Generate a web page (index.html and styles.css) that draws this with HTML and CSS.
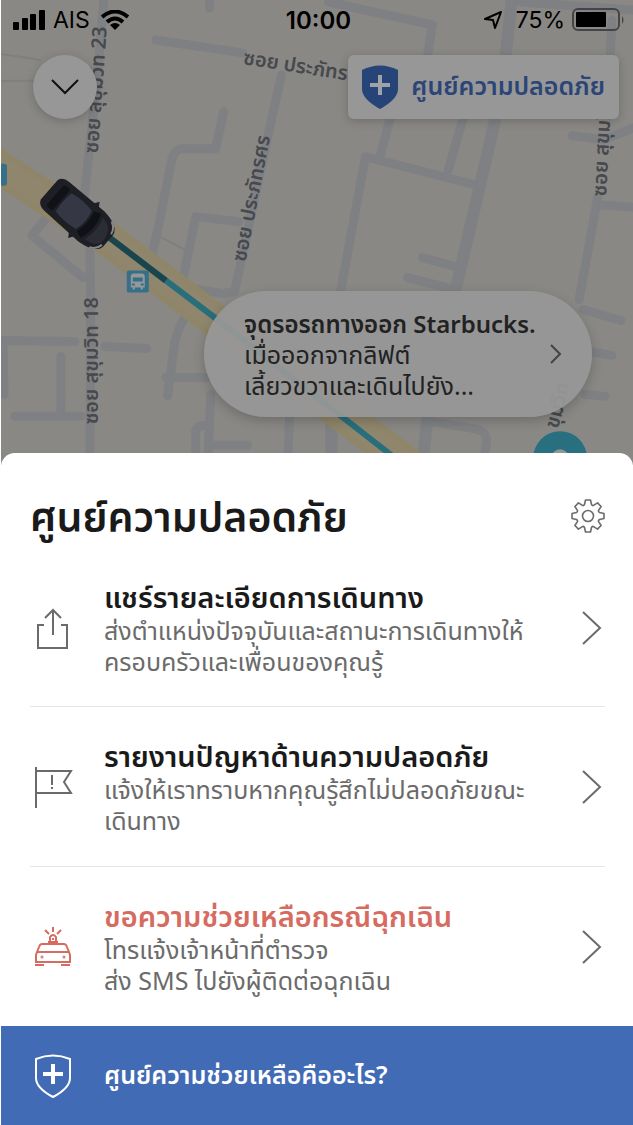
FILE: index.html
```
<!DOCTYPE html>
<html lang="th">

<head>
  <meta charset="UTF-8">
  <meta name="viewport" content="width=device-width, initial-scale=1.0">
  <title>ศูนย์ความปลอดภัย</title>
  <link rel="stylesheet" href="styles.css">
</head>

<body>
  <section class="trip">
    <svg class="map" viewBox="0 0 633 466" preserveAspectRatio="xMidYMin slice" aria-hidden="true">
      <g class="roads">
        <path d="M103 0 98 60 88 155 83 200 89 245 90 310 89 466" />
        <path d="M209 -4V8M155 40 242 53M281 75 268 133 234 292 222 294 184 288" />
        <path d="M223 112 215 149 180 149Q173 151 171 160L156 235 148 268M238 222 195 217 180 290M56 205 31 236 82 278" />
        <path d="M328 2 432 25 427 58M390 118 380 155M340 292 365 157 478 186M463 118 448 170" />
        <path class="wide" d="M512 -4 505 60 495 120 455 292" />
        <path d="M520 2 633 10M612 20 610 58M572 136 604 140 633 128M598 196 579 300M600 205 640 208" />
        <path d="M422 258 455 267M407 278 455 290M583 310 621 321M590 352 612 356M585 395 605 397" />
        <path d="M-4 341 74 342M104 347 146 349M60 357V417M14 417H80M2 342 3 395" />
        <path d="M184 318Q174 335 173 350L167 396M165 378H206M210 395 207 466M195 466V432Q196 426 207 426M210 446H247M289 418 287 466" />
        <path class="wide" d="M331 425V466M427 420 422 466" />
        <path d="M430 422 478 430Q488 434 486 444L483 466" />
      </g>
      <path class="thin" d="M0 54 40 60M0 81H34M161 238 184 250" />
      <path class="avenue-edge" d="M-20 155 105 238 212 319 410 466" />
      <path class="avenue" d="M-20 155 105 238 212 319 410 466" />
      <path class="route" d="M106 236 210 315 404 466" />
      <path class="route-dark" d="M106 236 165 281" />

      <g class="street">
        <text transform="translate(97 154) rotate(-86)">ซอย สุขุมวิท 23</text>
        <text transform="translate(242 64) rotate(9)">ซอย ประภัทรศร</text>
        <text transform="translate(245 263) rotate(-79)">ซอย ประภัทรศร</text>
        <text transform="translate(97 425) rotate(-90)">ซอย สุขุมวิท 18</text>
        <text transform="translate(606 197) rotate(-87)">ซอย สุขุมวิท</text>
        <text transform="translate(558 430) rotate(-76)">ขุมวิท</text>
      </g>

      <g transform="translate(126 271)">
        <rect width="22" height="22" rx="2" fill="#356f88" />
        <path d="M4 6Q4 3 7 3H15Q18 3 18 6V17H16V19H14V17H8V19H6V17H4Z" fill="#94989b" />
        <path d="M6 7H16V11H6ZM5 13H8V15H5ZM14 13H17V15H14Z" fill="#356f88" />
      </g>
      <rect x="-8" y="164" width="14" height="22" rx="3" fill="#356f88" />

      <g transform="translate(77 215) rotate(41)">
        <path d="M-38 -13Q-36 -19 -28 -19L18 -20Q38 -18 40 -8V8Q38 18 18 20L-28 19Q-36 19 -38 13Z" fill="#1e1f25" />
        <path d="M4 -18 8 -24 12 -18ZM4 18 8 24 12 18Z" fill="#1e1f25" />
        <path d="M-30 -13Q-24 -15 -22 -13V13Q-24 15 -30 13Z" fill="#111217" />
        <path d="M-19 -12Q-6 -15 8 -12 12 0 8 12 -6 15 -19 12Q-21 0 -19 -12Z" fill="#353844" />
        <path d="M10 -13 17 -16Q24 0 17 16L10 13Q14 0 10 -13Z" fill="#101116" />
        <path d="M21 -14Q34 -13 36 0T21 14Q26 0 21 -14Z" fill="#2a2c36" />
        <path d="M30 -17Q37 -14 38 -7M30 17Q37 14 38 7" fill="none" stroke="#85888d" stroke-width="2" />
      </g>

      <circle cx="560" cy="459" r="27" fill="#286f7f" />
      <circle cx="560" cy="459" r="9" fill="#929495" />
    </svg>

    <header class="status">
      <div class="status-group">
        <svg width="34" height="20" viewBox="0 0 34 20" aria-hidden="true">
          <rect x="1" y="12" width="6" height="8" rx="1" />
          <rect x="10" y="8" width="6" height="12" rx="1" />
          <rect x="18" y="4" width="6" height="16" rx="1" />
          <rect x="27" y="0" width="6" height="20" rx="1" />
        </svg>
        <span>AIS</span>
        <svg class="wifi" width="28" height="20" viewBox="0 0 28 20" fill="none" stroke="#000" stroke-width="4" aria-hidden="true">
          <path d="M1 7Q14 -4 27 7" />
          <path d="M6 12Q14 5 22 12" />
          <path d="M9 15Q14 11 19 15L14 20Z" fill="#000" stroke="none" />
        </svg>
      </div>
      <time class="clock">10:00</time>
      <div class="status-group status-right">
        <svg width="20" height="20" viewBox="0 0 20 20" fill="none" stroke="#000" stroke-width="2" stroke-linejoin="round" aria-hidden="true">
          <path d="M18 2 2 9 10 10 12 18Z" />
        </svg>
        <span class="percent">75%</span>
        <svg width="53" height="24" viewBox="0 0 53 24" aria-hidden="true">
          <rect x="1" y="1" width="46" height="21" rx="5" fill="none" stroke="#454545" stroke-width="2" />
          <rect x="4" y="4" width="30" height="15" rx="1" />
          <path d="M50 8Q53 12 50 16Z" fill="#454545" />
        </svg>
      </div>
    </header>

    <div class="controls">
      <button class="collapse" type="button" aria-label="ย่อ">
        <svg width="28" height="16" viewBox="0 0 28 16" fill="none" stroke="#111" stroke-width="2" aria-hidden="true">
          <path d="M1 1 14 14 27 1" />
        </svg>
      </button>
      <button class="safety" type="button">
        <svg width="36" height="44" viewBox="0 0 36 44" aria-hidden="true">
          <path d="M0 5Q18 -4 36 5V24Q36 34 18 44Q0 34 0 24Z" fill="#264478" />
          <path d="M18 10V30M8 20H28" stroke="#a0a2a5" stroke-width="4" />
        </svg>
        <span>ศูนย์ความปลอดภัย</span>
      </button>
    </div>

    <button class="pickup" type="button">
      <span class="pickup-text">
        <strong>จุดรอรถทางออก Starbucks.</strong>
        <span>เมื่อออกจากลิฟต์</span>
        <span>เลี้ยวขวาและเดินไปยัง...</span>
      </span>
      <svg width="12" height="20" viewBox="0 0 12 20" fill="none" stroke="#444" stroke-width="2" aria-hidden="true">
        <path d="M1 1 10 10 1 19" />
      </svg>
    </button>
  </section>

  <main class="sheet">
    <div class="sheet-head">
      <h1>ศูนย์ความปลอดภัย</h1>
      <button class="settings" type="button" aria-label="ตั้งค่า">
        <svg width="34" height="34" viewBox="0 0 34 34" fill="none" stroke="#6b6b6b" stroke-width="1.6" stroke-linejoin="round" aria-hidden="true">
          <path d="M14.5 1H19.5L20.5 5.5Q21.4 7 22.6 6.4L26.5 3.9 30.1 7.5 27.6 11.4Q27 12.6 28.5 13.5L33 14.5V19.5L28.5 20.5Q27 21.4 27.6 22.6L30.1 26.5 26.5 30.1 22.6 27.6Q21.4 27 20.5 28.5L19.5 33H14.5L13.5 28.5Q12.6 27 11.4 27.6L7.5 30.1 3.9 26.5 6.4 22.6Q7 21.4 5.5 20.5L1 19.5V14.5L5.5 13.5Q7 12.6 6.4 11.4L3.9 7.5 7.5 3.9 11.4 6.4Q12.6 7 13.5 5.5Z" />
          <circle cx="17" cy="17" r="5.5" />
        </svg>
      </button>
    </div>

    <ul class="options">
      <li>
        <button class="option" type="button">
          <svg class="icon" viewBox="0 0 44 44" aria-hidden="true">
            <path d="M14 19H8V42H37V19H31M23 29V5M15 12 23 4 31 12" />
          </svg>
          <span class="option-text">
            <strong>แชร์รายละเอียดการเดินทาง</strong>
            <span>ส่งตำแหน่งปัจจุบันและสถานะการเดินทางให้</span>
            <span>ครอบครัวและเพื่อนของคุณรู้</span>
          </span>
          <svg class="chevron" viewBox="0 0 20 34" aria-hidden="true">
            <path d="M1 1 18 17 1 33" />
          </svg>
        </button>
      </li>
      <li>
        <button class="option" type="button">
          <svg class="icon" viewBox="0 0 44 44" aria-hidden="true">
            <path d="M6 2V43M6 6H41L34 17 41 28H6M22 10V20M22 22V24" />
          </svg>
          <span class="option-text">
            <strong>รายงานปัญหาด้านความปลอดภัย</strong>
            <span>แจ้งให้เราทราบหากคุณรู้สึกไม่ปลอดภัยขณะ</span>
            <span>เดินทาง</span>
          </span>
          <svg class="chevron" viewBox="0 0 20 34" aria-hidden="true">
            <path d="M1 1 18 17 1 33" />
          </svg>
        </button>
      </li>
      <li>
        <button class="option emergency" type="button">
          <svg class="icon" viewBox="0 0 44 44" aria-hidden="true">
            <path d="M12 19H34Q36 19 37 22L39 27 40 30V37H6V30L7 27 9 22Q10 19 12 19ZM7 27H39M5 40H14M31 40H40M18 17H28M20 16V12Q23 8 26 12V16M22 14H24M23 2V7M15 5 19 9M31 5 27 9" />
            <circle cx="12" cy="32" r="0.5" />
            <circle cx="34" cy="32" r="0.5" />
          </svg>
          <span class="option-text">
            <strong>ขอความช่วยเหลือกรณีฉุกเฉิน</strong>
            <span>โทรแจ้งเจ้าหน้าที่ตำรวจ</span>
            <span>ส่ง SMS ไปยังผู้ติดต่อฉุกเฉิน</span>
          </span>
          <svg class="chevron" viewBox="0 0 20 34" aria-hidden="true">
            <path d="M1 1 18 17 1 33" />
          </svg>
        </button>
      </li>
    </ul>
  </main>

  <footer>
    <a class="help" href="#help">
      <svg class="icon" viewBox="0 0 44 44" aria-hidden="true">
        <path d="M6 5Q23 -2 40 5V24Q40 34 23 43Q6 34 6 24Z" />
        <path class="cross" d="M23 10V30M13 20H33" />
      </svg>
      <span>ศูนย์ความช่วยเหลือคืออะไร?</span>
    </a>
  </footer>
</body>

</html>
```

FILE: styles.css
```
* {
  box-sizing: border-box;
  margin: 0;
}

body {
  display: flex;
  flex-direction: column;
  min-height: 100vh;
  border-left: 1px solid #fff;
  background: #fff;
  color: #1a1a1a;
  font-family: "Noto Sans", "Noto Sans Thai", sans-serif;
}

button {
  padding: 0;
  border: 0;
  background: none;
  color: inherit;
  font: inherit;
  text-align: left;
  cursor: pointer;
}

svg {
  flex: none;
}

/* map */

.trip {
  position: relative;
  flex: 1 0 auto;
  overflow: hidden;
  padding-bottom: 48px;
  background: #8a8885;
}

.map {
  position: absolute;
  inset: 0;
  width: 100%;
  height: 100%;
}

.roads {
  fill: none;
  stroke: #7e8083;
  stroke-width: 9;
  stroke-linecap: round;
  stroke-linejoin: round;
}

.roads .wide {
  stroke-width: 12;
}

.thin {
  fill: none;
  stroke: #7f7f7e;
  stroke-width: 2;
}

.avenue,
.avenue-edge,
.route,
.route-dark {
  fill: none;
  stroke: #8f8568;
  stroke-width: 34;
}

.avenue {
  stroke: #90866d;
  stroke-width: 22;
}

.route {
  stroke: #286f7b;
  stroke-width: 6;
}

.route-dark {
  stroke: #1b454c;
  stroke-width: 6;
}

.street {
  fill: #46494d;
  font-size: 20px;
  font-weight: 600;
}

/* top bar */

.status {
  position: relative;
  display: grid;
  grid-template-columns: 1fr auto 1fr;
  align-items: center;
  height: 40px;
  padding: 0 8px 0 11px;
  color: #000;
  font-family: Inter, sans-serif;
  font-size: 23px;
}

.status-group {
  display: flex;
  align-items: center;
  gap: 7px;
}

.status-right {
  justify-content: flex-end;
}

.wifi {
  margin-left: 4px;
}

.percent {
  margin-left: 6px;
}

.clock {
  font-size: 24px;
  font-weight: 600;
}

.controls {
  position: relative;
  display: flex;
  justify-content: space-between;
  padding: 15px 14px 0 32px;
}

.collapse {
  display: flex;
  align-items: center;
  justify-content: center;
  width: 64px;
  height: 64px;
  border-radius: 50%;
  background: #979797;
  box-shadow: 0 2px 10px #0003;
}

.safety {
  display: flex;
  align-items: center;
  gap: 13px;
  height: 64px;
  padding: 0 14px;
  border-radius: 6px;
  background: #979797;
  box-shadow: 0 2px 10px #0003;
  color: #2c4577;
  font-size: 25px;
  font-weight: 600;
}

.pickup {
  position: relative;
  display: flex;
  align-items: center;
  justify-content: space-between;
  width: 388px;
  max-width: 90%;
  height: 126px;
  margin: 172px 41px 0 auto;
  padding: 0 30px 0 40px;
  border-radius: 63px;
  background: #979797ee;
  box-shadow: 0 4px 12px #0003;
}

.pickup-text {
  display: flex;
  flex-direction: column;
  color: #222;
  font-size: 25px;
  line-height: 31px;
  white-space: nowrap;
}

.pickup-text strong {
  font-size: 24px;
  font-weight: 600;
}

/* sheet */

.sheet {
  position: relative;
  margin-top: -12px;
  padding: 0 28px 0 29px;
  border-radius: 14px 14px 0 0;
  background: #fff;
}

.sheet-head {
  display: flex;
  align-items: center;
  justify-content: space-between;
  height: 126px;
}

h1 {
  font-size: 41px;
  font-weight: 600;
  line-height: 60px;
  white-space: nowrap;
}

.settings {
  display: flex;
}

.options {
  padding: 0;
  list-style: none;
}

.options li {
  height: 160px;
}

.options li + li {
  border-top: 1px solid #e6e6e6;
}

.options li:first-child {
  height: 127px;
}

.option {
  display: flex;
  align-items: center;
  width: 100%;
}

.options li + li .option {
  padding-top: 31px;
}

.icon {
  flex: none;
  width: 44px;
  height: 44px;
  margin-right: 30px;
  fill: none;
  stroke: #6b6b6b;
  stroke-width: 2;
}

.option-text {
  display: flex;
  flex: 1;
  flex-direction: column;
  color: #6b6b6b;
  font-size: 25px;
  line-height: 31px;
  white-space: nowrap;
}

.option-text strong {
  color: #1a1a1a;
  font-size: 29px;
  font-weight: 600;
  line-height: 36px;
}

.chevron {
  width: 20px;
  height: 34px;
  margin-right: 3px;
  fill: none;
  stroke: #6b6b6b;
  stroke-width: 2;
}

.emergency .icon {
  stroke: #d66b60;
}

.emergency strong {
  color: #d66b60;
}

.help {
  display: flex;
  align-items: center;
  height: 99px;
  padding: 0 28px 0 29px;
  background: #426bb5;
  color: #fff;
  font-size: 25px;
  font-weight: 600;
  text-decoration: none;
}

.help .icon {
  stroke: #fff;
}

.help .cross {
  stroke-width: 4;
}
```
